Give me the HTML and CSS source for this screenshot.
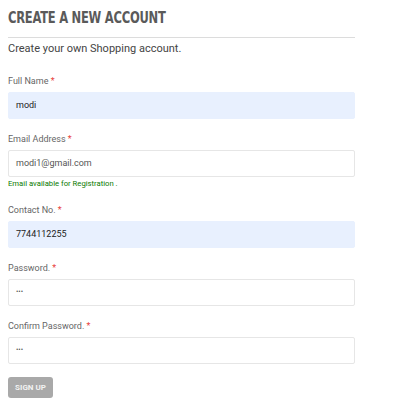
FILE: index.html
```html
<!DOCTYPE html>
<html>
<head>
<meta charset="utf-8">
<link rel="stylesheet" href="styles.css">
</head>
<body>
<div class="page">
  <h2 class="title"><span class="title-text">CREATE A NEW ACCOUNT</span></h2>
  <p class="intro">Create your own Shopping account.</p>
  <form class="form">
    <div class="group">
      <label class="label">Full Name <span class="req">*</span></label>
      <div class="input filled">modi</div>
    </div>
    <div class="group">
      <label class="label">Email Address <span class="req">*</span></label>
      <div class="input">modi1@gmail.com</div>
      <div class="status">Email available for Registration .</div>
    </div>
    <div class="group">
      <label class="label">Contact No. <span class="req">*</span></label>
      <div class="input filled">7744112255</div>
    </div>
    <div class="group">
      <label class="label">Password. <span class="req">*</span></label>
      <div class="input dots">•••</div>
    </div>
    <div class="group">
      <label class="label">Confirm Password. <span class="req">*</span></label>
      <div class="input dots">•••</div>
    </div>
    <button type="button" class="btn">SIGN UP</button>
  </form>
</div>
</body>
</html>
```

FILE: styles.css
```css
html, body {
  margin: 0;
  padding: 0;
  background: #fff;
}
body {
  padding: 8px;
  font-family: Roboto, "Liberation Sans", sans-serif;
  color: #555;
}
.page {
  width: 347px;
}
.title {
  margin: 0;
  padding-bottom: 9px;
  border-bottom: 1px solid #dcdcdc;
  font-family: "DejaVu Sans", sans-serif;
  font-stretch: condensed;
  font-weight: bold;
  font-size: 16px;
  line-height: 20px;
  color: #5a5a5a;
  white-space: nowrap;
}
.title-text {
  display: inline-block;
  transform: scaleX(0.8);
  transform-origin: 0 50%;
  letter-spacing: -0.3px;
}
.intro {
  margin: 4px 0 0;
  font-size: 11px;
  line-height: 14px;
  color: #444;
}
.form {
  margin-top: 18px;
}
.group {
  margin-bottom: 13px;
}
.label {
  display: block;
  font-size: 9px;
  line-height: 14px;
  margin-bottom: 4px;
  color: #666;
}
.req {
  color: #e8413c;
}
.input {
  box-sizing: border-box;
  height: 27px;
  border: 1px solid #e6e6e6;
  border-radius: 2px;
  padding: 0 7px;
  font-size: 9px;
  line-height: 25px;
  color: #555;
  background: #fff;
}
.input.filled {
  background: #e8f0fe;
  border-color: #e8f0fe;
  color: #222;
}
.input.dots {
  font-size: 7px;
  color: #555;
}
.status {
  font-size: 7.7px;
  line-height: 13px;
  color: #0a7a00;
}
.btn {
  display: block;
  margin-top: 5px;
  width: 45px;
  height: 21px;
  padding: 0;
  border: 0;
  border-radius: 3px;
  background: #a9a9a9;
  color: #f2f2f2;
  font-family: Roboto, "Liberation Sans", sans-serif;
  font-weight: bold;
  font-size: 8px;
}
```
